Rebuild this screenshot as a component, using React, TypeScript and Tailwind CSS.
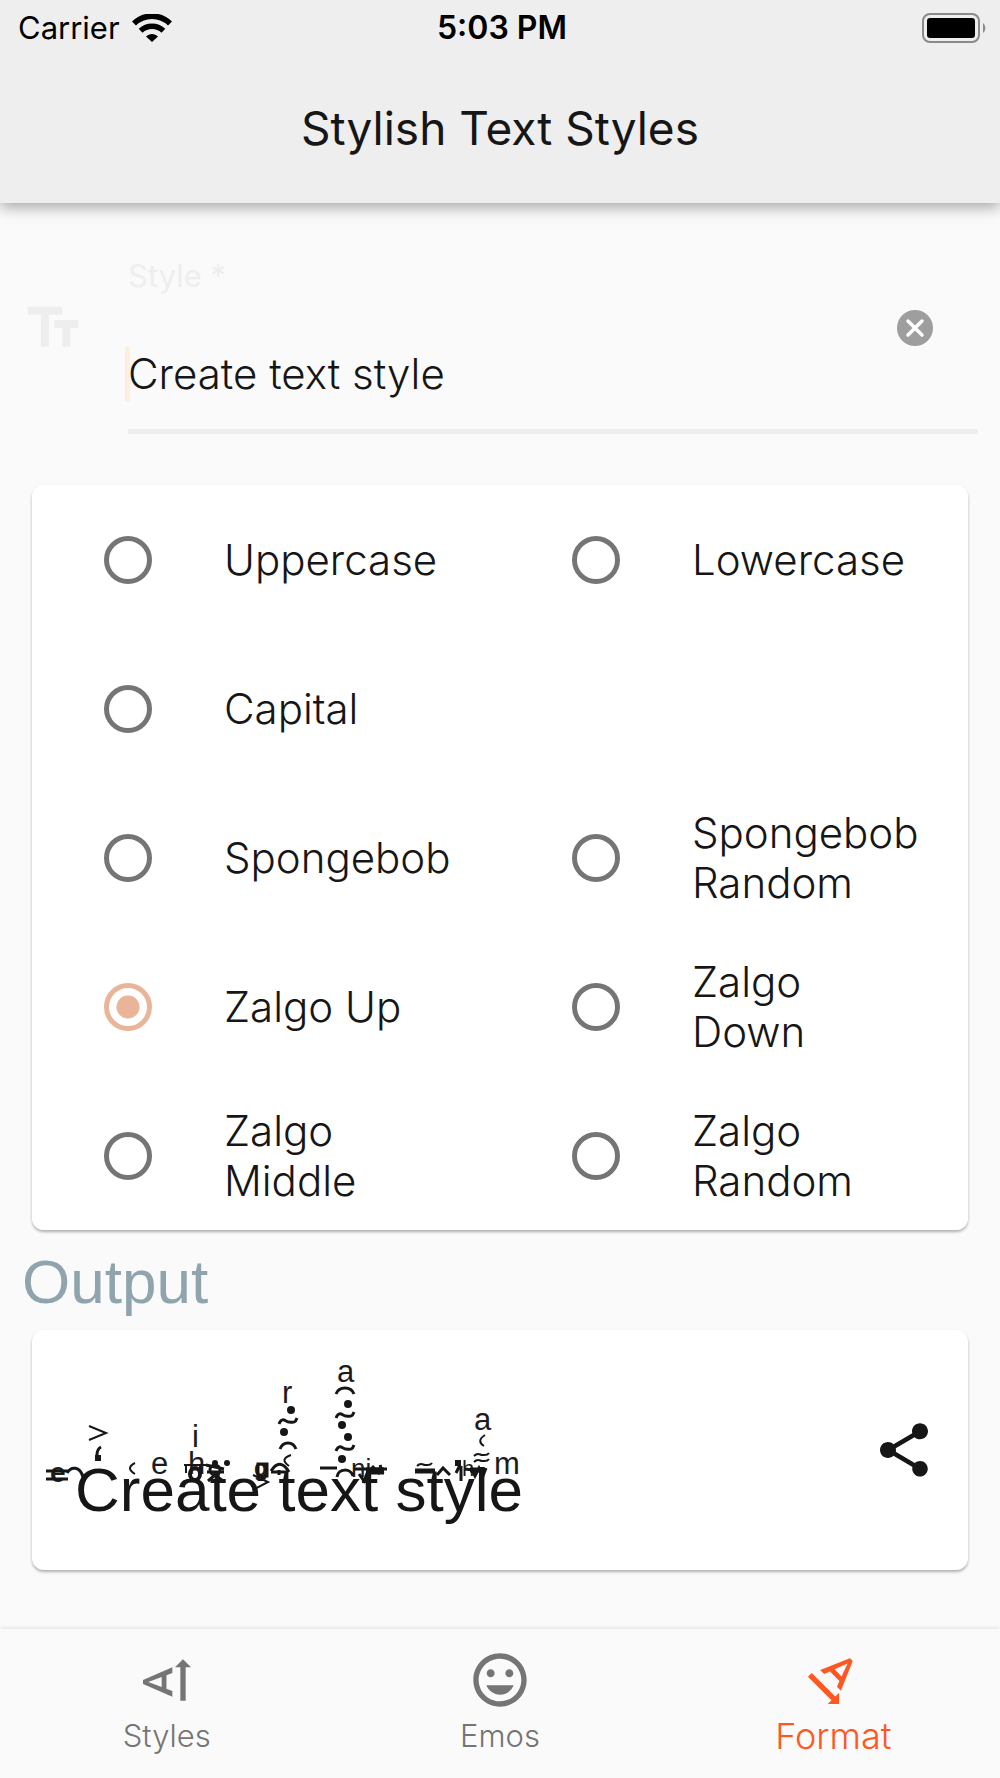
import { useState } from "react";
import {
  MdMood,
  MdShare,
  MdTextFields,
  MdTextRotateUp,
  MdTextRotationAngledown,
} from "react-icons/md";

type Option = { id: string; label: string } | null;

const options: Option[] = [
  { id: "upper", label: "Uppercase" },
  { id: "lower", label: "Lowercase" },
  { id: "capital", label: "Capital" },
  null,
  { id: "sponge", label: "Spongebob" },
  { id: "sponge-random", label: "Spongebob Random" },
  { id: "zalgo-up", label: "Zalgo Up" },
  { id: "zalgo-down", label: "Zalgo Down" },
  { id: "zalgo-middle", label: "Zalgo Middle" },
  { id: "zalgo-random", label: "Zalgo Random" },
];

function Wifi() {
  return (
    <svg className="h-7 w-10" viewBox="0 0 40 28" fill="none" stroke="#000" aria-label="Wi-Fi" role="img">
      <path d="M2 9.5C12-.3 28-.3 38 9.5" strokeWidth="5.6" />
      <path d="M8.6 16.8c6.6-6 16.2-6 22.8 0" strokeWidth="5.6" />
      <path d="M14 22.5c3.4-3.4 8.6-3.4 12 0L20 28z" fill="#000" stroke="none" />
    </svg>
  );
}

function Battery() {
  return (
    <svg className="h-[30px] w-16" viewBox="0 0 64 30" aria-label="Battery full" role="img">
      <rect x="1" y="1" width="56" height="28" rx="7" fill="none" stroke="#8a8a8a" strokeWidth="2" />
      <rect x="5" y="5" width="48" height="20" rx="3" fill="#000" />
      <path d="M61 10c3 2 3 8 0 10z" fill="#8a8a8a" />
    </svg>
  );
}

function ZalgoMarks() {
  return (
    <svg
      className="pointer-events-none absolute bottom-3 left-0 h-[180px] w-[500px] overflow-visible"
      viewBox="44 1356 500 180"
      fill="none"
      stroke="#161616"
      strokeWidth="3"
      aria-hidden="true"
    >
      <g fill="#1c1c1c" stroke="none" fontFamily="'Liberation Sans', sans-serif" fontSize="31">
        <text x="151" y="1472">e</text>
        <text x="192" y="1445">i</text>
        <text x="188" y="1472">h</text>
        <text x="282" y="1401">r</text>
        <text x="337" y="1380">a</text>
        <text x="474" y="1428">a</text>
        <text x="494" y="1472">m</text>
        <text x="50" y="1480" fontWeight="700" fontSize="28">e</text>
        <text x="254" y="1474" fontWeight="700" fontSize="23">g</text>
        <text x="351" y="1475" fontSize="26">ni</text>
        <text x="462" y="1474" fontSize="22">h</text>
      </g>
      <path d="M46 1469h22M46 1477h22M67 1471c4-7 13-7 16 4" />
      <path d="M89 1424l17 7-17 7" strokeWidth="2" />
      <path d="M101 1445q-4 2-4 8" />
      <path d="M95 1453h6v6h-6z" fill="#161616" stroke="none" />
      <path d="M135 1461q-10 5 0 11" strokeWidth="2" />
      <path d="M184 1463h22M186 1471v-8M200 1463v10" strokeWidth="2" />
      <ellipse cx="195" cy="1472" rx="5" ry="6" strokeWidth="4" />
      <circle cx="215" cy="1468" r="5" />
      <path d="M190 1467h12M206 1463l18 4M208 1479l7-6 8 6M207 1470h17" />
      <path d="M258 1462h9v12h-9zM262 1474v5" />
      <path d="M253 1473l15 7-15 8" strokeWidth="2" />
      <path d="M271 1469q9-14 18 1M271 1470h16M279 1468v5" />
      <path d="M291 1453q-12 4-2 11" strokeWidth="2" />
      <path d="M280 1447c3-8 13-8 16 0M279 1422c3-8 7-2 10-2s6 2 8-4" />
      <path d="M336 1392c3-8 15-8 18 0M336 1416c3-8 7-2 10-2s6 2 8-4M336 1449c3-8 7-2 10-2s6 2 8-4" />
      <path d="M320 1466h17M337 1475c1-9 14-9 16-1" />
      <path d="M354 1467h33M359 1472l5 7 4-10M372 1464l8 8M380 1463l3 8" />
      <path d="M366 1469h18" strokeWidth="7" />
      <path d="M415 1469h20" strokeWidth="5" />
      <path d="M417 1464c4-4 6-1 8-1s5 1 7-2" strokeWidth="2" />
      <path d="M437 1473l6-7 7 7" />
      <path d="M455 1458h6v6h-6z" fill="#161616" stroke="none" />
      <path d="M460 1463l-4 8M461 1464v15M464 1467l20 2M471 1466l4 8 4-8 4 8 3-8" />
      <path d="M470 1468h15" strokeWidth="5" />
      <path d="M485 1433q-9 6-1 11M474 1454c4-4 6-1 8-1s5 1 7-2M474 1460c4-4 6-1 8-1s5 1 7-2" strokeWidth="2" />
      <g fill="#161616" stroke="none">
        <circle cx="215" cy="1461" r="3" />
        <circle cx="227" cy="1461" r="3" />
        <circle cx="291" cy="1408" r="4" />
        <circle cx="284" cy="1430" r="4" />
        <circle cx="348" cy="1402" r="4" />
        <circle cx="342" cy="1423" r="4" />
        <circle cx="348" cy="1435" r="4" />
        <circle cx="342" cy="1457" r="4" />
      </g>
    </svg>
  );
}

export default function App() {
  const [text, setText] = useState("Create text style");
  const [selected, setSelected] = useState("zalgo-up");

  return (
    <div className="flex min-h-screen flex-col bg-[#fafafa] font-['Inter',sans-serif] text-[#161616]">
      <header className="bg-[#eeeeee] pb-11 shadow-[0_4px_14px_rgba(0,0,0,0.35)]">
        <div className="grid grid-cols-3 items-center pl-[18px] pr-3.5 pt-1">
          <div className="flex items-center gap-3 text-[31px] leading-[48px] text-black">
            <span>Carrier</span>
            <Wifi />
          </div>
          <div className="text-center text-[32px] font-semibold leading-[48px] text-black">5:03 PM</div>
          <div className="flex justify-end">
            <Battery />
          </div>
        </div>
        <h1 className="pt-[45px] text-center text-[46px] leading-[62px]">Stylish Text Styles</h1>
      </header>

      <main>
        <div className="flex items-start gap-[43px] pl-[21px] pr-[22px] pt-[49px]">
          <MdTextFields className="mt-11 size-16 shrink-0 text-[#eeeeee]" />
          <div className="relative flex-1 border-b-[5px] border-[#eeeeee] pb-[27px]">
            <label htmlFor="style" className="block text-[31px] leading-[48px] text-[#eeeeee]">
              Style *
            </label>
            <input
              id="style"
              value={text}
              onChange={(e) => setText(e.target.value)}
              className="mt-[46px] block h-14 w-full bg-transparent text-[42px] font-light leading-[56px] caret-[#fdeedd] outline-none"
            />
            <span className="absolute bottom-[27px] -left-[3px] h-14 w-[5px] rounded-full bg-[#fdeedd]" />
            <button
              aria-label="Clear"
              onClick={() => setText("")}
              className="absolute right-[45px] top-[58px] size-9"
            >
              <svg viewBox="0 0 36 36" aria-hidden="true">
                <circle cx="18" cy="18" r="18" fill="#9e9e9e" />
                <path d="M11 11l14 14M25 11L11 25" stroke="#fff" strokeWidth="3.5" strokeLinecap="round" />
              </svg>
            </button>
          </div>
        </div>

        <fieldset
          aria-label="Text format"
          className="mx-8 mt-[51px] grid auto-rows-[149px] grid-cols-2 rounded-xl bg-white shadow-[0_2px_3px_rgba(0,0,0,0.3)]"
        >
          {options.map((o, i) =>
            o ? (
              <label key={o.id} className="flex items-center pl-[72px] pr-11 text-[42px] font-light leading-[50px]">
                <input
                  type="radio"
                  name="format"
                  checked={selected === o.id}
                  onChange={() => setSelected(o.id)}
                  className="mr-[72px] size-12 shrink-0 appearance-none rounded-full border-[5px] border-[#757575] checked:border-[#e9b497] checked:bg-[radial-gradient(circle,#e9b497_11px,transparent_12px)]"
                />
                {o.label}
              </label>
            ) : (
              <span key={i} />
            ),
          )}
        </fieldset>

        <h2 className="px-[22px] pt-4 font-['Liberation_Sans',sans-serif] text-[62px] leading-[72px] text-[#90a4ae]">
          Output
        </h2>

        <section className="mx-8 mt-3 flex items-center justify-between rounded-xl bg-white py-5 pl-3 pr-8 shadow-[0_2px_3px_rgba(0,0,0,0.3)]">
          <div className="relative h-[200px] flex-1">
            <p className="pl-[31px] pt-[104px] font-['Liberation_Sans',sans-serif] text-[62px] leading-[72px]">
              Create text style
            </p>
            <ZalgoMarks />
          </div>
          <button aria-label="Share">
            <MdShare className="size-16" />
          </button>
        </section>
      </main>

      <nav className="mt-auto grid grid-cols-3 pb-[18px] pt-[19px] text-center text-[#757575] shadow-[0_-1px_4px_rgba(0,0,0,0.1)]">
        <a href="#styles" className="flex flex-col items-center text-[31px] font-light leading-[48px]">
          <MdTextRotateUp className="size-16" />
          Styles
        </a>
        <a href="#emos" className="flex flex-col items-center text-[31px] font-light leading-[48px]">
          <MdMood className="size-16" />
          Emos
        </a>
        <a href="#format" aria-current="page" className="flex flex-col items-center text-[36px] font-light leading-[48px] text-[#ff5722]">
          <MdTextRotationAngledown className="size-16" />
          Format
        </a>
      </nav>
    </div>
  );
}
